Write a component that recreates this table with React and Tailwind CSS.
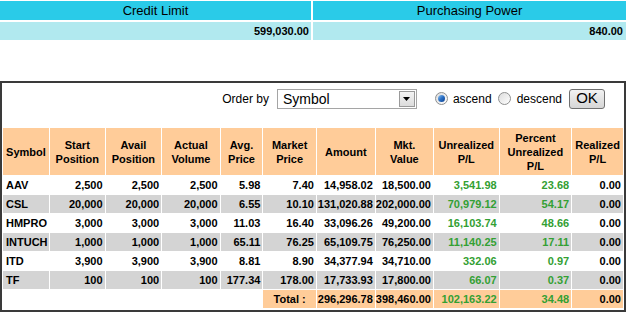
import React from 'react'

const rows = [
  ['AAV', '2,500', '2,500', '2,500', '5.98', '7.40', '14,958.02', '18,500.00', '3,541.98', '23.68', '0.00'],
  ['CSL', '20,000', '20,000', '20,000', '6.55', '10.10', '131,020.88', '202,000.00', '70,979.12', '54.17', '0.00'],
  ['HMPRO', '3,000', '3,000', '3,000', '11.03', '16.40', '33,096.26', '49,200.00', '16,103.74', '48.66', '0.00'],
  ['INTUCH', '1,000', '1,000', '1,000', '65.11', '76.25', '65,109.75', '76,250.00', '11,140.25', '17.11', '0.00'],
  ['ITD', '3,900', '3,900', '3,900', '8.81', '8.90', '34,377.94', '34,710.00', '332.06', '0.97', '0.00'],
  ['TF', '100', '100', '100', '177.34', '178.00', '17,733.93', '17,800.00', '66.07', '0.37', '0.00'],
]

const widths = [46, 55, 56, 58, 42, 53, 58, 55, 65, 72, 51]

const headers = [
  ['Symbol'],
  ['Start', 'Position'],
  ['Avail', 'Position'],
  ['Actual', 'Volume'],
  ['Avg.', 'Price'],
  ['Market', 'Price'],
  ['Amount'],
  ['Mkt.', 'Value'],
  ['Unrealized', 'P/L'],
  ['Percent', 'Unrealized', 'P/L'],
  ['Realized', 'P/L'],
]

function Radio({ checked }) {
  return (
    <span className="relative inline-flex h-[13px] w-[13px] items-center justify-center rounded-full border border-[#8e8f8f] bg-gradient-to-br from-[#dcdcdc] to-[#ffffff]">
      {checked && (
        <span className="h-[7px] w-[7px] rounded-full bg-gradient-to-br from-[#8fc3ef] via-[#2a6fc4] to-[#0d3f8e]" />
      )}
    </span>
  )
}

export default function App() {
  return (
    <div className="w-[627px] h-[315px] bg-white font-['Liberation_Sans',Arial,sans-serif] text-black">
      {/* credit summary */}
      <div className="grid grid-cols-[311px_313px] gap-x-[2px] gap-y-[2px] pt-[1px]">
        <div className="h-[19px] bg-[#2acbe8] text-[13px] leading-[19px] text-center">Credit Limit</div>
        <div className="h-[19px] bg-[#2acbe8] text-[13px] leading-[19px] text-center">Purchasing Power</div>
        <div className="h-[18px] bg-[#b1e9ef] text-[11px] font-bold leading-[18px] text-right pr-[2px]">599,030.00</div>
        <div className="h-[18px] bg-[#b1e9ef] text-[11px] font-bold leading-[18px] text-right pr-[3px]">840.00</div>
      </div>

      {/* portfolio box */}
      <div className="mt-[41px] w-[626px] h-[231px] border-2 border-[#3a3a3a] box-border">
        <div className="flex items-center justify-end pr-[19px] pt-[5px] h-[26px]">
          <span className="text-[12px] mr-[8px]">Order by</span>
          <div className="flex items-center w-[140px] h-[20px] border border-[#a5a5a5] bg-white">
            <span className="flex-1 pl-[5px] text-[14px] leading-[18px]">Symbol</span>
            <span className="flex items-center justify-center w-[16px] h-[16px] mr-[1px] border border-[#9a9a9a] bg-gradient-to-b from-[#f4f4f4] to-[#dcdcdc]">
              <svg width="7" height="4" viewBox="0 0 7 4">
                <path d="M0 0h7L3.5 4z" fill="#000" />
              </svg>
            </span>
          </div>
          <span className="ml-[18px] flex items-center">
            <Radio checked />
          </span>
          <span className="ml-[5px] text-[12px]">ascend</span>
          <span className="ml-[6px] flex items-center">
            <Radio />
          </span>
          <span className="ml-[6px] text-[12px]">descend</span>
          <span className="ml-[7px] flex items-center justify-center w-[36px] h-[20px] rounded-[3px] border border-[#707070] bg-gradient-to-b from-[#f2f2f2] to-[#d6d6d6] text-[15px]">
            OK
          </span>
        </div>

        <table className="mt-[18px] table-fixed border-separate border-spacing-[1px] text-[11px] font-bold">
          <colgroup>
            {widths.map((w, i) => (
              <col key={i} style={{ width: w }} />
            ))}
          </colgroup>
          <thead>
            <tr>
              {headers.map((h, i) => (
                <th key={i} className="h-[47px] bg-[#ffcc99] p-0 text-center align-middle leading-[14px] font-bold">
                  {h.map((line, j) => (
                    <div key={j}>{line}</div>
                  ))}
                </th>
              ))}
            </tr>
          </thead>
          <tbody>
            {rows.map((r, ri) => (
              <tr key={r[0]} className={ri % 2 === 1 ? 'bg-[#d4d4d4]' : 'bg-white'}>
                {r.map((c, ci) => (
                  <td
                    key={ci}
                    className={`h-[18px] p-0 leading-[18px] whitespace-nowrap ${
                      ci === 0 ? 'text-left pl-[3px]' : 'text-right pr-[2px]'
                    } ${ci === 8 || ci === 9 ? 'text-[#33a033]' : ''}`}
                  >
                    {c}
                  </td>
                ))}
              </tr>
            ))}
            <tr>
              <td className="h-[18px] p-0" />
              <td className="p-0" />
              <td className="p-0" />
              <td className="p-0" />
              <td className="p-0" />
              <td className="bg-[#ffcc99] p-0 text-center leading-[18px]">Total :</td>
              <td className="bg-[#ffcc99] p-0 pr-[2px] text-right leading-[18px]">296,296.78</td>
              <td className="bg-[#ffcc99] p-0 pr-[2px] text-right leading-[18px]">398,460.00</td>
              <td className="bg-[#ffcc99] p-0 pr-[2px] text-right leading-[18px] text-[#33a033]">102,163.22</td>
              <td className="bg-[#ffcc99] p-0 pr-[2px] text-right leading-[18px] text-[#33a033]">34.48</td>
              <td className="bg-[#ffcc99] p-0 pr-[2px] text-right leading-[18px]">0.00</td>
            </tr>
          </tbody>
        </table>
      </div>
    </div>
  )
}
